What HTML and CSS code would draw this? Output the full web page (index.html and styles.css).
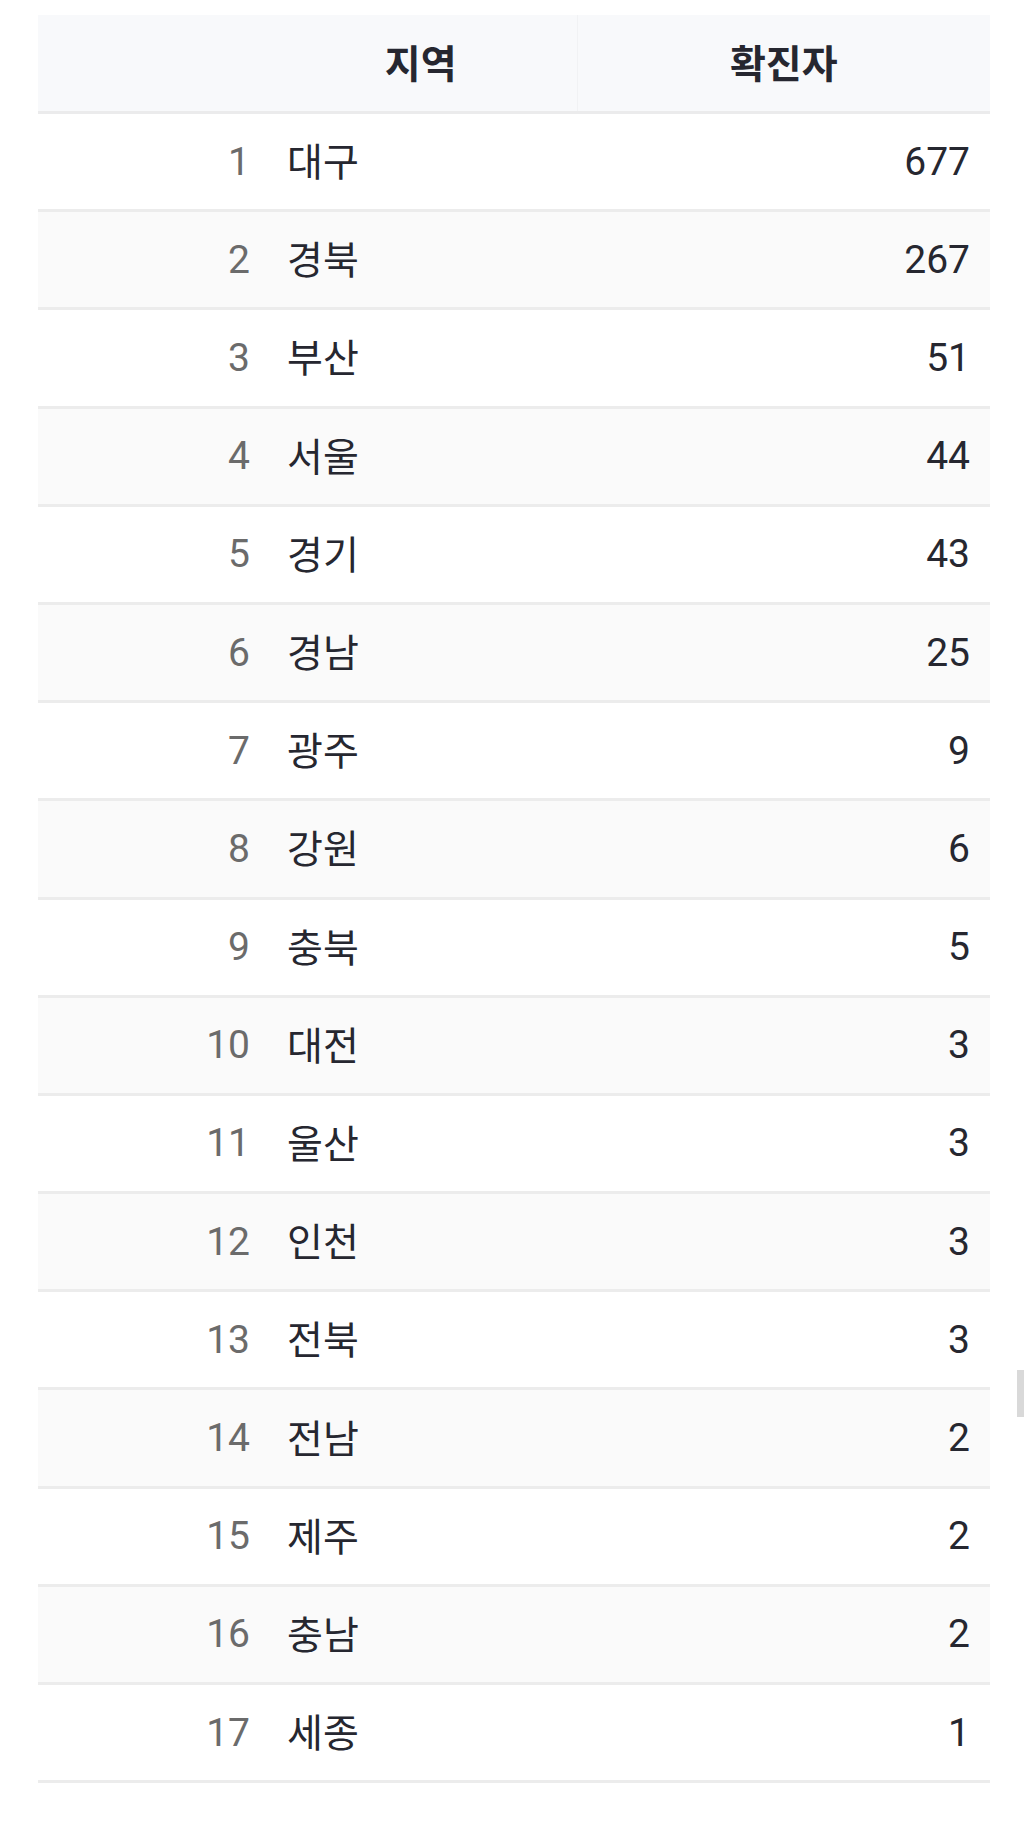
FILE: index.html
```html
<!DOCTYPE html>
<html lang="ko">
<head>
<meta charset="utf-8">
<link rel="stylesheet" href="styles.css">
</head>
<body>
<div class="page">
  <table class="data">
    <colgroup>
      <col class="c-idx">
      <col class="c-reg">
      <col class="c-val">
    </colgroup>
    <thead>
      <tr><th class="h-idx"></th><th class="h-reg">지역</th><th class="h-val">확진자</th></tr>
    </thead>
    <tbody>
      <tr><th>1</th><td class="reg">대구</td><td class="val">677</td></tr>
      <tr><th>2</th><td class="reg">경북</td><td class="val">267</td></tr>
      <tr><th>3</th><td class="reg">부산</td><td class="val">51</td></tr>
      <tr><th>4</th><td class="reg">서울</td><td class="val">44</td></tr>
      <tr><th>5</th><td class="reg">경기</td><td class="val">43</td></tr>
      <tr><th>6</th><td class="reg">경남</td><td class="val">25</td></tr>
      <tr><th>7</th><td class="reg">광주</td><td class="val">9</td></tr>
      <tr><th>8</th><td class="reg">강원</td><td class="val">6</td></tr>
      <tr><th>9</th><td class="reg">충북</td><td class="val">5</td></tr>
      <tr><th>10</th><td class="reg">대전</td><td class="val">3</td></tr>
      <tr><th>11</th><td class="reg">울산</td><td class="val">3</td></tr>
      <tr><th>12</th><td class="reg">인천</td><td class="val">3</td></tr>
      <tr><th>13</th><td class="reg">전북</td><td class="val">3</td></tr>
      <tr><th>14</th><td class="reg">전남</td><td class="val">2</td></tr>
      <tr><th>15</th><td class="reg">제주</td><td class="val">2</td></tr>
      <tr><th>16</th><td class="reg">충남</td><td class="val">2</td></tr>
      <tr><th>17</th><td class="reg">세종</td><td class="val">1</td></tr>
    </tbody>
  </table>
</div>
<div class="scrollbar"></div>
</body>
</html>
```

FILE: styles.css
```css
html, body {
  margin: 0;
  padding: 0;
  background: #ffffff;
}

body {
  font-family: Roboto, "Noto Sans CJK KR", sans-serif;
  color: #262730;
}

.page {
  padding: 15px 34px 0 38px;
}

.data {
  width: 952px;
  border-collapse: collapse;
  table-layout: fixed;
  font-size: 39px;
}

.c-idx { width: 227px; }
.c-reg { width: 312px; }
.c-val { width: 413px; }

.data thead th {
  height: 92px;
  padding: 0 0 4px 0;
  background: #f8f9fb;
  font-weight: 700;
  text-align: center;
  border-bottom: 3px solid #ebebec;
  vertical-align: middle;
}

.data thead .h-reg {
  border-right: 1px solid #f1f2f4;
}

.data tbody tr {
  height: 98.2px;
  border-bottom: 3px solid #ececec;
}

.data tbody tr:nth-child(even) {
  background: #fafafa;
}

.data tbody th {
  font-weight: 400;
  color: #6b6b6b;
  text-align: right;
  padding: 0 15px 0 0;
  vertical-align: middle;
}

.data td {
  padding: 0;
  vertical-align: middle;
}

.data td.reg {
  text-align: left;
  padding-left: 22px;
  padding-bottom: 5px;
}

.data td.val {
  text-align: right;
  padding-right: 20px;
}

.scrollbar {
  position: absolute;
  left: 1017px;
  top: 1370px;
  width: 7px;
  height: 47px;
  background: #d9d9d9;
}
```
